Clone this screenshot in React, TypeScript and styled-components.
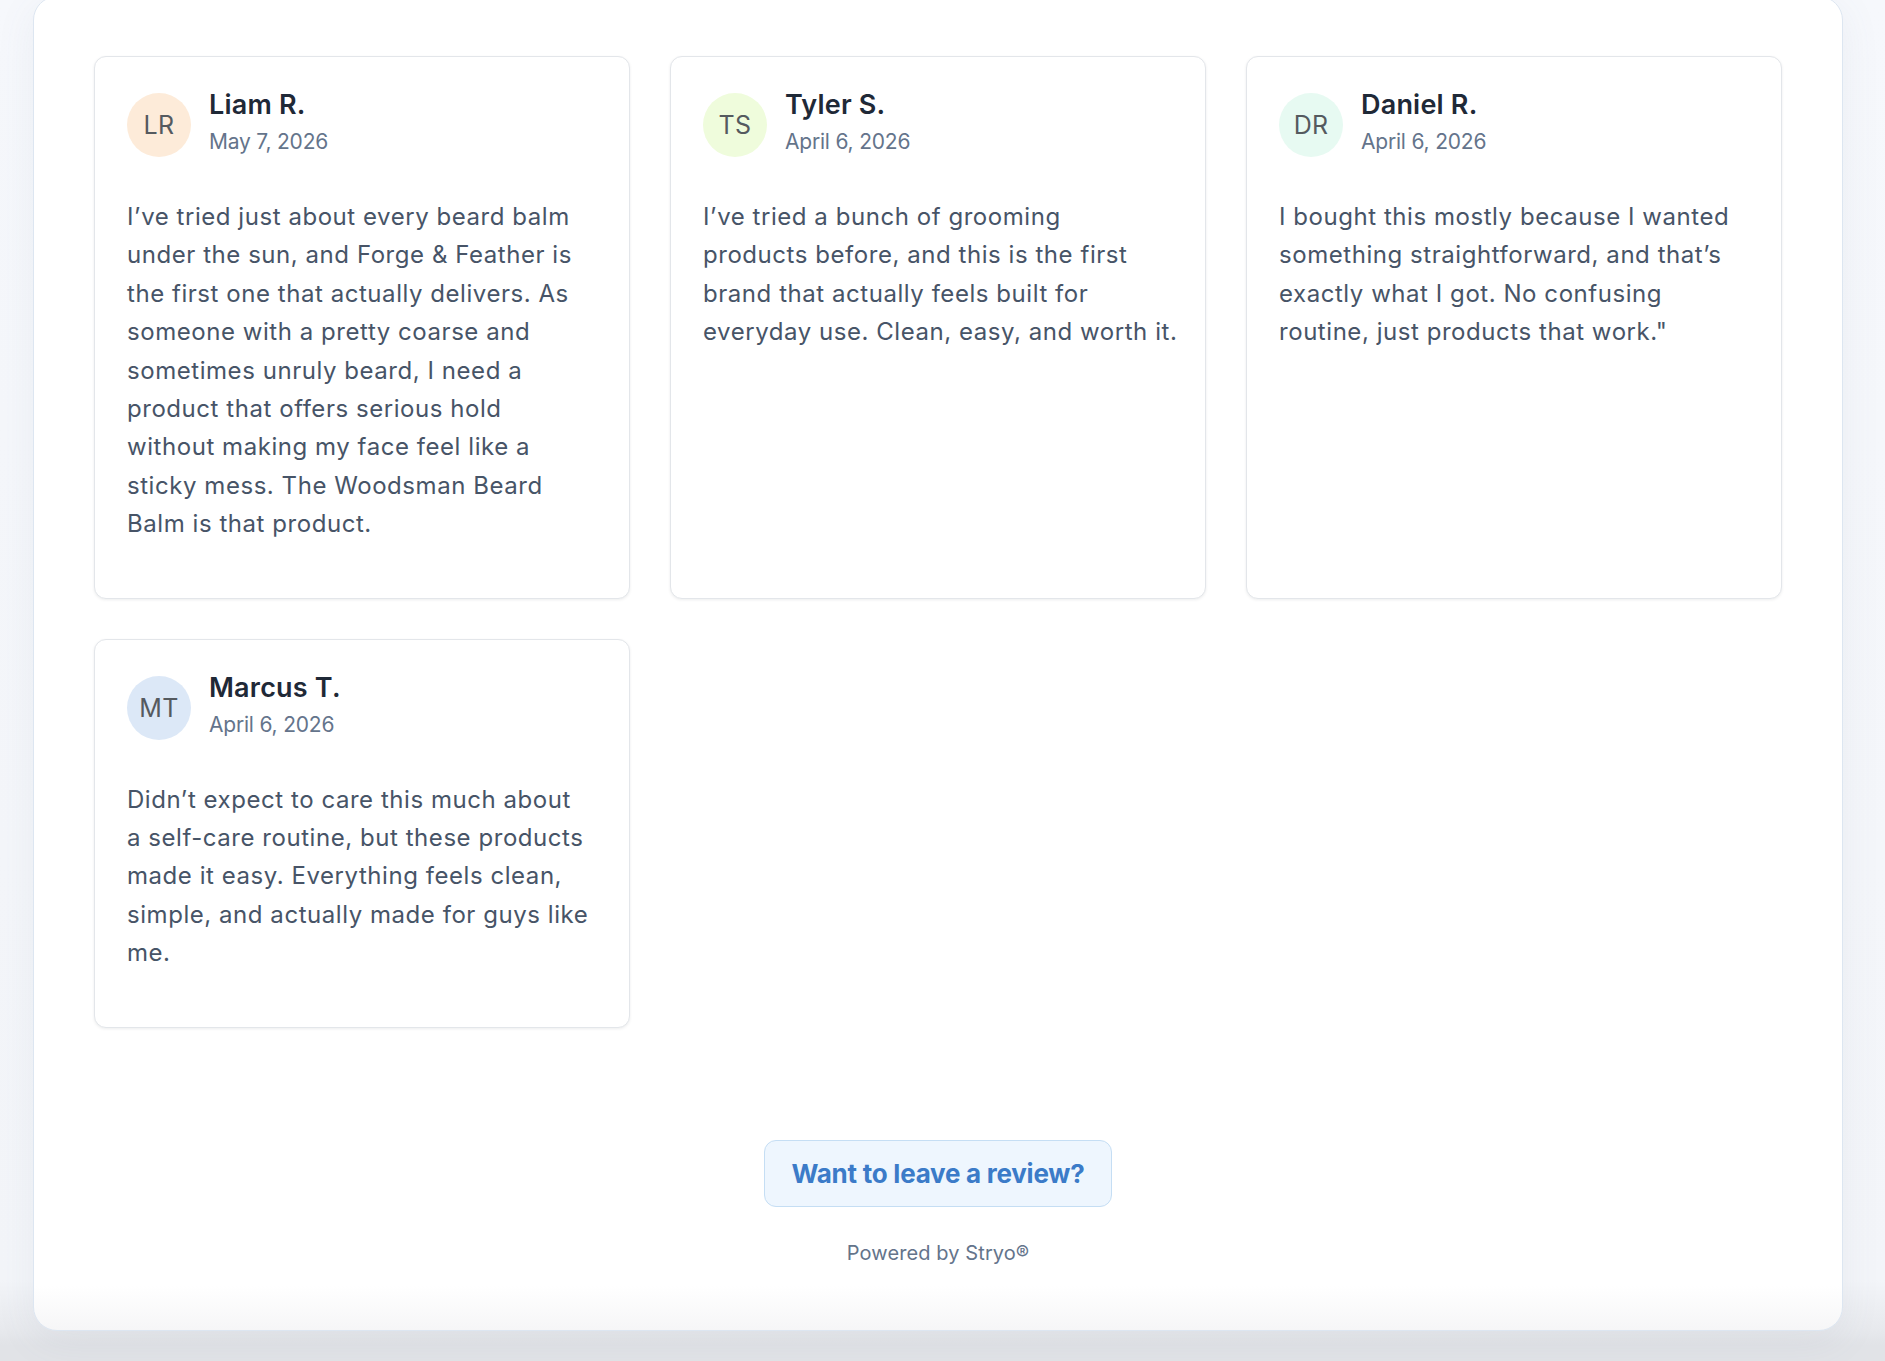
import React from "react";
import styled, { createGlobalStyle } from "styled-components";

const GlobalStyle = createGlobalStyle`
  html, body { height: 100%; }
  body {
    margin: 0;
    font-family: Inter, "Open Sans", "Liberation Sans", sans-serif;
    background: linear-gradient(
      180deg,
      #f6f8fc 0px,
      #f3f5f9 1280px,
      #e7e9ed 1330px,
      #e1e3e7 1345px,
      #e1e3e7 100%
    );
    overflow: hidden;
  }
`;

const Shell = styled.main`
  box-sizing: border-box;
  width: 1810px;
  margin: -4px 0 0 33px;
  padding: 59px 60px 65px 60px;
  background: linear-gradient(180deg, #ffffff calc(100% - 44px), #f6f6f7 100%);
  border: 1px solid #dde6f1;
  border-radius: 24px;
  box-shadow: 0 10px 40px rgba(100, 116, 139, 0.08);
`;

const Grid = styled.section`
  display: grid;
  grid-template-columns: repeat(3, minmax(0, 1fr));
  gap: 40px;
  align-items: stretch;
`;

const Card = styled.article`
  box-sizing: border-box;
  min-width: 0;
  padding: 36px 32px 54px;
  background: #ffffff;
  border: 1px solid #e3e6ea;
  border-radius: 12px;
  box-shadow: 0 1px 3px rgba(15, 23, 42, 0.08);
`;

const Header = styled.header`
  display: flex;
  align-items: flex-start;
  gap: 18px;
`;

const Avatar = styled.div<{ $bg: string }>`
  flex: none;
  width: 64px;
  height: 64px;
  border-radius: 50%;
  background: ${(p) => p.$bg};
  display: flex;
  align-items: center;
  justify-content: center;
  font-size: 25px;
  font-weight: 400;
  letter-spacing: 0.3px;
  color: #555a5f;
`;

const Meta = styled.div`
  display: flex;
  flex-direction: column;
  margin-top: -4px;
`;

const Name = styled.h3`
  margin: 0;
  font-size: 27px;
  line-height: 32px;
  font-weight: 600;
  letter-spacing: 0.2px;
  color: #1f2937;
`;

const DateText = styled.time`
  margin-top: 6px;
  font-size: 21px;
  line-height: 30px;
  letter-spacing: -0.2px;
  color: #64748b;
`;

const Body = styled.p`
  margin: 41px 0 0;
  font-size: 24px;
  line-height: 38.4px;
  letter-spacing: 0.55px;
  color: #475467;
  white-space: nowrap;
`;

const Footer = styled.footer`
  display: flex;
  flex-direction: column;
  align-items: center;
  margin-top: 112px;
`;

const ReviewButton = styled.button`
  font-family: inherit;
  padding: 17px 27px;
  font-size: 26px;
  line-height: 31px;
  font-weight: 700;
  letter-spacing: -0.25px;
  color: #3b7bc8;
  background: #eef6fe;
  border: 1px solid #c5def4;
  border-radius: 12px;
  cursor: pointer;
`;

const Powered = styled.div`
  margin-top: 34px;
  font-size: 20px;
  line-height: 24px;
  letter-spacing: 0.1px;
  color: #64748b;
`;

type Review = { initials: string; name: string; date: string; bg: string; lines: string[] };

const reviews: Review[] = [
  {
    initials: "LR",
    name: "Liam R.",
    date: "May 7, 2026",
    bg: "#fdebd9",
    lines: [
      "I’ve tried just about every beard balm",
      "under the sun, and Forge & Feather is",
      "the first one that actually delivers. As",
      "someone with a pretty coarse and",
      "sometimes unruly beard, I need a",
      "product that offers serious hold",
      "without making my face feel like a",
      "sticky mess. The Woodsman Beard",
      "Balm is that product.",
    ],
  },
  {
    initials: "TS",
    name: "Tyler S.",
    date: "April 6, 2026",
    bg: "#effcdc",
    lines: [
      "I’ve tried a bunch of grooming",
      "products before, and this is the first",
      "brand that actually feels built for",
      "everyday use. Clean, easy, and worth it.",
    ],
  },
  {
    initials: "DR",
    name: "Daniel R.",
    date: "April 6, 2026",
    bg: "#e7faf2",
    lines: [
      "I bought this mostly because I wanted",
      "something straightforward, and that’s",
      "exactly what I got. No confusing",
      "routine, just products that work.\"",
    ],
  },
  {
    initials: "MT",
    name: "Marcus T.",
    date: "April 6, 2026",
    bg: "#dce8f7",
    lines: [
      "Didn’t expect to care this much about",
      "a self-care routine, but these products",
      "made it easy. Everything feels clean,",
      "simple, and actually made for guys like",
      "me.",
    ],
  },
];

export default function App() {
  return (
    <>
      <GlobalStyle />
      <Shell>
        <Grid>
          {reviews.map((r) => (
            <Card key={r.name}>
              <Header>
                <Avatar $bg={r.bg}>{r.initials}</Avatar>
                <Meta>
                  <Name>{r.name}</Name>
                  <DateText>{r.date}</DateText>
                </Meta>
              </Header>
              <Body>
                {r.lines.map((line, i) => (
                  <React.Fragment key={i}>
                    {i > 0 && <br />}
                    {line}
                  </React.Fragment>
                ))}
              </Body>
            </Card>
          ))}
        </Grid>
        <Footer>
          <ReviewButton type="button">Want to leave a review?</ReviewButton>
          <Powered>Powered by Stryo®</Powered>
        </Footer>
      </Shell>
    </>
  );
}
